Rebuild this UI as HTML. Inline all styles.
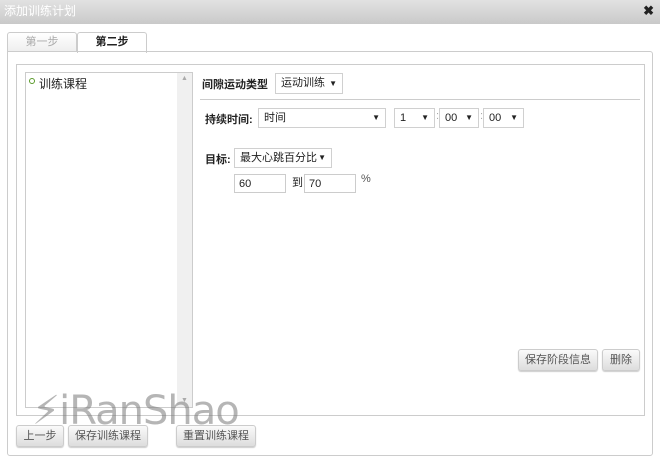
<!DOCTYPE html>
<html><head><meta charset="utf-8"><style>
*{box-sizing:border-box;margin:0;padding:0}
body{width:660px;height:461px;background:#fff;font-family:"Liberation Sans","Noto Sans CJK SC",sans-serif;font-size:11px;color:#222;position:relative;overflow:hidden}
.abs{position:absolute}
.title{left:0;top:0;width:660px;height:24px;background:linear-gradient(#e2e2e2,#c9c9c9);color:#fff;font-size:12px;line-height:22px;padding-left:4px}
.x{right:6px;top:3px;font-size:13px;color:#222;font-weight:bold}
.tab{top:32px;height:20px;border:1px solid #ccc;border-bottom:none;border-radius:3px 3px 0 0;text-align:center;line-height:19px;font-size:11px}
.sel{border:1px solid #d0d0d0;background:#fff;height:18px;line-height:16px;padding-left:5px;font-size:11px}
.sel:after{content:"▼";position:absolute;right:5px;top:0;font-size:8px}
.inp{border:1px solid #ccc;height:19px;line-height:19px;padding-left:4px;font-size:11px}
.btn{height:22px;border:1px solid #ccc;border-radius:3px;background:linear-gradient(#fafafa,#ddd);color:#555;text-align:center;line-height:20px;font-size:11px;box-shadow:0 1px 1px #ccc}
b{font-weight:bold}
</style></head><body>
<div class="abs title">添加训练计划</div>
<div class="abs x">✖</div>
<div class="abs tab" style="left:7px;width:70px;background:linear-gradient(#fff,#eee);color:#aaa">第一步</div>
<div class="abs tab" style="left:77px;width:70px;background:#fff;height:21px;font-weight:bold">第二步</div>
<div class="abs" style="left:7px;top:51px;width:646px;height:405px;border:1px solid #ccc;border-radius:0 3px 3px 3px"></div>
<div class="abs" style="left:16px;top:64px;width:629px;height:352px;border:1px solid #ccc"></div>
<div class="abs" style="left:25px;top:72px;width:168px;height:336px;border:1px solid #ccc"></div>
<div class="abs" style="left:177px;top:73px;width:15px;height:334px;background:#f0f0f0"></div>
<div class="abs" style="left:181px;top:75px;font-size:7px;color:#aaa">▲</div>
<div class="abs" style="left:181px;top:397px;font-size:7px;color:#aaa">▼</div>
<div class="abs" style="left:29px;top:78px;width:6px;height:6px;border:1.5px solid #5a9a2a;border-radius:50%"></div>
<div class="abs" style="left:39px;top:75px;font-size:12px">训练课程</div>
<div class="abs" style="left:202px;top:76px"><b>间隙运动类型</b></div>
<div class="abs sel" style="left:275px;top:73px;width:68px;height:21px;line-height:19px">运动训练</div>
<div class="abs" style="left:200px;top:99px;width:440px;border-top:1px solid #ccc"></div>
<div class="abs" style="left:205px;top:111px"><b>持续时间:</b></div>
<div class="abs sel" style="left:258px;top:108px;width:128px;height:20px;line-height:18px">时间</div>
<div class="abs sel" style="left:394px;top:108px;width:41px;height:20px;line-height:18px">1</div>
<div class="abs" style="left:436px;top:110px;color:#aaa">:</div>
<div class="abs sel" style="left:439px;top:108px;width:40px;height:20px;line-height:18px">00</div>
<div class="abs" style="left:480px;top:110px;color:#aaa">:</div>
<div class="abs sel" style="left:483px;top:108px;width:41px;height:20px;line-height:18px">00</div>
<div class="abs" style="left:205px;top:151px"><b>目标:</b></div>
<div class="abs sel" style="left:234px;top:148px;width:98px;height:20px;line-height:18px">最大心跳百分比</div>
<div class="abs inp" style="left:234px;top:174px;width:52px">60</div>
<div class="abs" style="left:292px;top:174px">到</div>
<div class="abs inp" style="left:304px;top:174px;width:52px">70</div>
<div class="abs" style="left:361px;top:173px;color:#555">%</div>
<div class="abs btn" style="left:518px;top:349px;width:80px">保存阶段信息</div>
<div class="abs btn" style="left:602px;top:349px;width:38px">删除</div>
<div class="abs btn" style="left:16px;top:425px;width:48px">上一步</div>
<div class="abs btn" style="left:68px;top:425px;width:80px">保存训练课程</div>
<div class="abs btn" style="left:176px;top:425px;width:80px">重置训练课程</div>
<div class="abs" style="left:32px;top:386px;font-size:40px;line-height:50px;color:rgba(120,120,120,0.55);font-family:'DejaVu Sans',sans-serif;letter-spacing:-1px">⚡iRanShao</div>
</body></html>
